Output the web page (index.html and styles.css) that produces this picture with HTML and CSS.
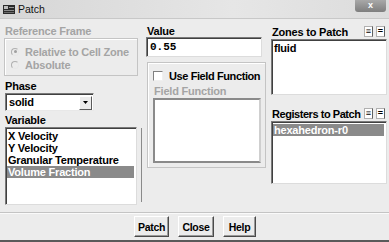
FILE: index.html
```html
<!DOCTYPE html>
<html>
<head>
<meta charset="utf-8">
<link rel="stylesheet" href="styles.css">
</head>
<body>
<div class="window">
  <div class="titlebar">
    <svg class="appicon" width="12" height="9" viewBox="0 0 12 9">
      <rect x="0" y="0" width="12" height="9" fill="#2a2a2a"/>
      <rect x="1" y="1" width="4" height="3" fill="#bdbdbd"/>
      <rect x="6" y="2" width="5" height="1" fill="#9a9a9a"/>
      <rect x="1" y="5" width="10" height="1" fill="#8a8a8a"/>
      <rect x="1" y="7" width="10" height="1" fill="#6a6a6a"/>
    </svg>
    <span class="title">Patch</span>
    <div class="closebtn">x</div>
  </div>
  <div class="content">
    <div class="col col-left">
      <div class="label disabled">Reference Frame</div>
      <div class="frame">
        <div class="radio-row disabled"><span class="radio checked"></span>Relative to Cell Zone</div>
        <div class="radio-row disabled"><span class="radio"></span>Absolute</div>
      </div>
      <div class="label phase-label">Phase</div>
      <div class="dropdown"><span class="dd-text">solid</span><span class="dd-btn"><svg width="5" height="3" viewBox="0 0 5 3"><path d="M0 0H5L2.5 3Z" fill="#000"/></svg></span></div>
      <div class="label var-label">Variable</div>
      <div class="listbox var-list">
        <div class="item">X Velocity</div>
        <div class="item">Y Velocity</div>
        <div class="item">Granular Temperature</div>
        <div class="item selected">Volume Fraction</div>
      </div>
    </div>
    <div class="vsep"></div>
    <div class="col col-mid">
      <div class="label">Value</div>
      <div class="input">0.55</div>
      <div class="frame ff-frame">
        <div class="check-row"><span class="check"></span>Use Field Function</div>
        <div class="label disabled ff-label">Field Function</div>
        <div class="textarea"></div>
      </div>
    </div>
    <div class="col col-right">
      <div class="head-row"><span class="label">Zones to Patch</span><span class="mini-btns"><span class="mini">≡</span><span class="mini">=</span></span></div>
      <div class="listbox zones-list">
        <div class="item">fluid</div>
      </div>
      <div class="head-row reg-head"><span class="label">Registers to Patch</span><span class="mini-btns"><span class="mini">≡</span><span class="mini">=</span></span></div>
      <div class="listbox reg-list">
        <div class="item selected">hexahedron-r0</div>
      </div>
    </div>
  </div>
  <div class="footer">
    <button class="btn btn-patch">Patch</button>
    <button class="btn btn-close">Close</button>
    <button class="btn btn-help">Help</button>
  </div>
</div>
</body>
</html>
```
FILE: styles.css
```css
html, body {
  margin: 0;
  padding: 0;
  background: #ececec;
}
body {
  font-family: "Liberation Sans", Arial, sans-serif;
  font-size: 11px;
  letter-spacing: -0.2px;
  font-weight: bold;
  color: #000;
}
.window {
  width: 389px;
  height: 242px;
  box-sizing: border-box;
  background: #ececec;
  border-bottom: 2px solid #5a5a5a;
  display: flex;
  flex-direction: column;
}
.titlebar {
  height: 19px;
  flex: none;
  box-sizing: border-box;
  background: linear-gradient(to right, #d6d6d6, #e6e6e6 60%, #dcdcdc);
  border-bottom: 1px solid #c8c8c8;
  display: flex;
  align-items: center;
  padding-left: 3px;
  position: relative;
}
.appicon { margin-right: 3px; }
.title {
  font-weight: normal;
  font-size: 10.5px;
  letter-spacing: 0;
  color: #111;
}
.closebtn {
  position: absolute;
  right: 3px;
  top: 0;
  width: 31px;
  height: 12px;
  background: linear-gradient(#a8a8a8, #7e7e7e);
  border-radius: 0 0 3px 3px;
  color: #fff;
  font-size: 9px;
  text-align: center;
  line-height: 11px;
}
.content {
  display: flex;
  padding: 6px 0 0 4px;
  height: 192px;
  flex: none;
  box-sizing: border-box;
}
.col { display: flex; flex-direction: column; }
.col-left { width: 134px; margin-right: 3px; }
.vsep {
  width: 1px;
  height: 74px;
  margin-top: 103px;
  background: #8a8a8a;
  margin-right: 4px;
}
.col-mid { width: 120px; margin-right: 5px; }
.col-right { width: 116px; }
.label {
  line-height: 12px;
  height: 12px;
  white-space: nowrap;
  padding-left: 1px;
}
.disabled { color: #a4a4a4; }
.frame {
  border: 1px solid #c4c4c4;
  box-shadow: inset 1px 1px 0 #fff;
}
.col-left .frame {
  margin-top: 1px;
  height: 38px;
  box-sizing: border-box;
  padding: 6px 0 0 6px;
}
.radio-row {
  display: flex;
  align-items: center;
  height: 13px;
  white-space: nowrap;
}
.radio {
  width: 8px;
  height: 8px;
  border-radius: 50%;
  border: 1px solid #b0b0b0;
  border-right-color: #e8e8e8;
  border-bottom-color: #e8e8e8;
  margin-right: 6px;
  position: relative;
  box-sizing: border-box;
}
.radio.checked::after {
  content: "";
  position: absolute;
  left: 1.5px;
  top: 1.5px;
  width: 3px;
  height: 3px;
  border-radius: 50%;
  background: #a0a0a0;
}
.phase-label { margin-top: 4px; }
.dropdown {
  width: 89px;
  height: 18px;
  box-sizing: border-box;
  margin-top: 1px;
  margin-left: 1px;
  background: #fff;
  border: 1px solid;
  border-color: #7a7a7a #e8e8e8 #e8e8e8 #7a7a7a;
  box-shadow: inset 1px 1px 0 #404040;
  display: flex;
  align-items: center;
  justify-content: space-between;
}
.dd-text { padding-left: 3px; }
.dd-btn {
  width: 13px;
  height: 14px;
  margin-right: 1px;
  margin-top: 1px;
  background: #ececec;
  border: 1px solid;
  border-color: #fff #5a5a5a #5a5a5a #fff;
  box-sizing: border-box;
  display: flex;
  align-items: center;
  justify-content: center;
}
.var-label { margin-top: 3px; }
.listbox {
  background: #fff;
  border: 1px solid;
  border-color: #7a7a7a #dcdcdc #dcdcdc #7a7a7a;
  box-shadow: inset 1px 1px 0 #404040;
  box-sizing: border-box;
  padding: 2px 2px 0 1px;
}
.var-list {
  margin-top: 1px;
  margin-left: 1px;
  width: 132px;
  height: 78px;
}
.item {
  line-height: 12px;
  height: 12px;
  white-space: nowrap;
  padding-left: 1px;
}
.item.selected {
  background: #8a8a8a;
  color: #fff;
}
.input {
  margin-top: 0;
  width: 116px;
  height: 20px;
  box-sizing: border-box;
  background: #fff;
  border: 1px solid;
  border-color: #7a7a7a #dcdcdc #dcdcdc #7a7a7a;
  box-shadow: inset 1px 1px 0 #404040;
  font-family: "Liberation Mono", "DejaVu Sans Mono", monospace;
  font-size: 11px;
  letter-spacing: 0;
  font-weight: bold;
  line-height: 18px;
  padding-left: 3px;
}
.ff-frame {
  margin-top: 5px;
  margin-left: 1px;
  width: 119px;
  height: 106px;
  box-sizing: border-box;
  padding: 6px 0 0 5px;
}
.check-row {
  display: flex;
  align-items: center;
  height: 13px;
  white-space: nowrap;
  letter-spacing: -0.4px;
}
.check {
  width: 10px;
  height: 10px;
  box-sizing: border-box;
  background: #fff;
  border: 1px solid;
  border-color: #808080 #f0f0f0 #f0f0f0 #808080;
  margin-right: 6px;
}
.ff-label { margin-top: 3px; }
.textarea {
  margin-top: 1px;
  width: 108px;
  height: 65px;
  box-sizing: border-box;
  background: #fff;
  border: 2px solid;
  border-color: #8a8a8a #cfcfcf #8a8a8a #8a8a8a;
}
.head-row {
  display: flex;
  justify-content: space-between;
  align-items: center;
  height: 13px;
}
.reg-head .label { letter-spacing: -0.45px; }
.mini-btns { display: flex; gap: 3px; margin-right: 2px; }
.mini {
  width: 7px;
  height: 9px;
  background: #fff;
  border: 1px solid #b0b0b0;
  border-right-color: #606060;
  font-size: 9px;
  line-height: 9px;
  letter-spacing: 0;
  text-align: center;
  font-weight: bold;
}
.zones-list {
  margin-top: 1px;
  width: 116px;
  height: 56px;
}
.reg-head { margin-top: 12px; }
.reg-list {
  margin-top: 1px;
  width: 116px;
  height: 63px;
}
.footer {
  border-top: 1px solid #c4c4c4;
  box-shadow: inset 0 1px 0 #fafafa;
  margin-top: 1px;
  flex: 1;
  display: flex;
  justify-content: center;
  align-items: center;
  gap: 9px;
  padding-left: 1px;
}
.btn {
  font-family: "Liberation Sans", Arial, sans-serif;
  font-size: 10.5px;
  letter-spacing: -0.3px;
  font-weight: bold;
  height: 21px;
  padding: 0;
  background: #ececec;
  border: 1px solid;
  border-color: #fff #4a4a4a #4a4a4a #fff;
  box-shadow: inset -1px -1px 0 #9a9a9a;
  color: #000;
}
.btn-patch { width: 35px; }
.btn-close { width: 36px; }
.btn-help { width: 33px; }
```
